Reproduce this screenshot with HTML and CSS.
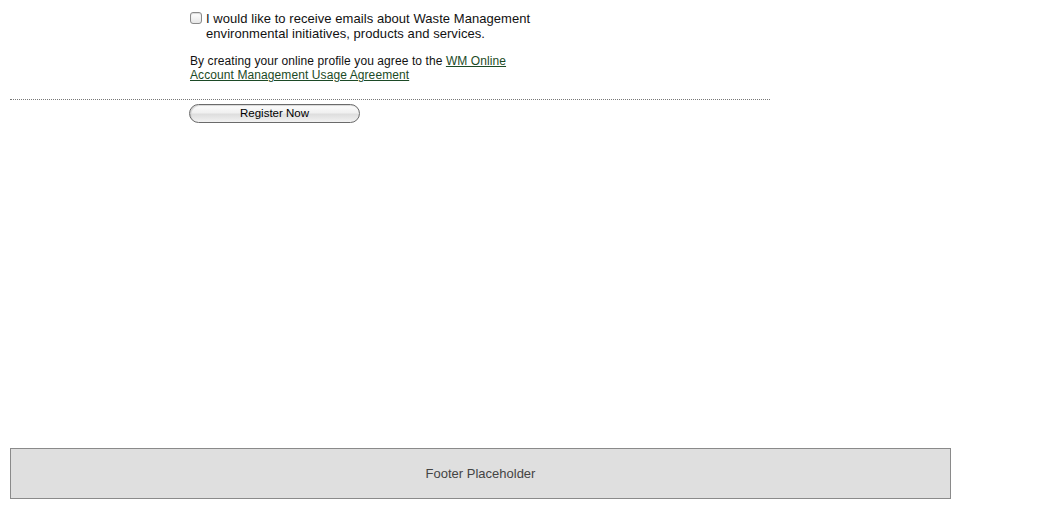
FILE: index.html
```html
<!DOCTYPE html>
<html lang="en">
<head>
<meta charset="utf-8">
<title>Register</title>
<link rel="stylesheet" href="styles.css">
</head>
<body>
<div class="page">
  <div class="content">
    <form class="form">
      <label class="optin">
        <input type="checkbox" class="optin-box">
        <span class="optin-text">I would like to receive emails about Waste Management environmental initiatives, products and services.</span>
      </label>
      <p class="agree">By creating your online profile you agree to the <a href="#" class="agree-link">WM Online Account Management Usage Agreement</a></p>
      <div class="divider"></div>
      <div class="actions">
        <button type="button" class="btn">Register Now</button>
      </div>
    </form>
  </div>
  <footer class="footer">Footer Placeholder</footer>
</div>
</body>
</html>
```

FILE: styles.css
```css
html, body {
  margin: 0;
  padding: 0;
  background: #fff;
}
body {
  font-family: "Liberation Sans", Arial, Helvetica, sans-serif;
  color: #111;
}
.page {
  padding-left: 10px;
}
.content {
  height: 448px;
  width: 760px;
}
.form {
  padding-top: 11px;
}
.optin {
  display: flex;
  align-items: flex-start;
  margin-left: 180px;
  width: 360px;
  font-size: 13px;
  line-height: 15px;
  letter-spacing: 0.06px;
}
.optin-box {
  appearance: none;
  -webkit-appearance: none;
  width: 12px;
  height: 12px;
  margin: 1px 4px 0 0;
  border: 1px solid #8a8a8a;
  border-radius: 3px;
  background: linear-gradient(#ffffff, #e6e6e6);
  box-shadow: inset 0 1px 1px rgba(0,0,0,0.15);
  flex: none;
}
.optin-text {
  display: block;
  width: 335px;
}
.agree {
  margin: 13px 0 0 180px;
  width: 335px;
  font-size: 12px;
  line-height: 14px;
  letter-spacing: 0.09px;
}
.agree-link {
  color: #1c4a26;
  text-decoration: underline;
}
.divider {
  margin-top: 17px;
  border-top: 1px dotted #777;
  width: 760px;
}
.actions {
  margin: 4px 0 0 179px;
}
.btn {
  display: block;
  width: 171px;
  height: 19px;
  padding: 0;
  border: 1px solid #6a6a6a;
  border-radius: 10px;
  background: linear-gradient(#fdfdfd 0%, #f0f0f0 45%, #dedede 55%, #f2f2f2 100%);
  box-shadow: inset 1px 1px 1px rgba(0,0,0,0.15);
  font-family: "Liberation Sans", Arial, sans-serif;
  font-size: 11.5px;
  color: #000;
  line-height: 17px;
  text-align: center;
}
.footer {
  box-sizing: border-box;
  width: 941px;
  height: 51px;
  border: 1px solid #8a8a8a;
  background: #dfdfdf;
  color: #444;
  font-size: 13px;
  display: flex;
  align-items: center;
  justify-content: center;
}
```
